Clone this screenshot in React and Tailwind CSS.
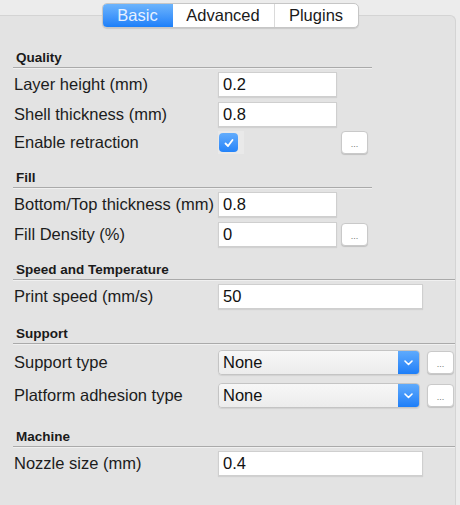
import React from "react";

function Header({ children, wide, top }) {
  return (
    <div className={top}>
      <div className="h-[19px] flex items-center pl-[3px] text-[13.5px] font-bold text-[#1a1a1a] leading-none">
        {children}
      </div>
      <div className={(wide ? "w-[442px]" : "w-[359px]") + " h-[2px] border-t border-[#aaaaaa] border-b border-b-[#f0f0f0]"} />
    </div>
  );
}

function Label({ children }) {
  return <div className="w-[205px] pl-[1px] text-[16.5px] text-[#1c1c1c] leading-none whitespace-nowrap">{children}</div>;
}

function TextBox({ value, w }) {
  return (
    <div className={w + " h-[25px] bg-white border border-[#cfcfcf] shadow-[0_1px_1px_rgba(0,0,0,0.08)] flex items-center pl-[4px] text-[16.5px] text-[#111] leading-none"}>
      {value}
    </div>
  );
}

function DotButton({ ml }) {
  return (
    <div className={ml + " w-[27px] h-[23px] bg-white rounded-[4px] border border-[#c9c9c9] shadow-[0_1px_1px_rgba(0,0,0,0.15)] flex items-center justify-center text-[9px] text-[#777] leading-none pt-[3px]"}>
      ...
    </div>
  );
}

function Select({ value }) {
  return (
    <div className="w-[202px] h-[25px] flex rounded-[4px] border border-[#c4c4c4] shadow-[0_1px_1px_rgba(0,0,0,0.08)] overflow-hidden">
      <div className="flex-1 bg-gradient-to-b from-[#f7f7f7] to-[#ececec] flex items-center pl-[4px] text-[16.5px] text-[#111] leading-none">
        {value}
      </div>
      <div className="w-[21px] bg-gradient-to-b from-[#5eaafc] to-[#1c7ef8] flex items-center justify-center">
        <svg width="9" height="6" viewBox="0 0 9 6">
          <path d="M1 1 L4.5 4.5 L8 1" fill="none" stroke="white" strokeWidth="1.6" strokeLinecap="round" strokeLinejoin="round" />
        </svg>
      </div>
    </div>
  );
}

export default function App() {
  return (
    <div className="w-[460px] h-[505px] bg-[#ececec] overflow-hidden font-['Liberation_Sans',Arial,sans-serif]">
      <div className="relative z-10 flex justify-center pt-[3px]">
        <div className="flex h-[25px] rounded-[5px] border border-[#c6c6c6] shadow-[0_1px_1px_rgba(0,0,0,0.12)] overflow-hidden bg-white text-[16.5px] leading-none">
          <div className="w-[70px] bg-gradient-to-b from-[#6cb4fc] to-[#1b7ff9] text-[#e6f1ff] flex items-center justify-center">Basic</div>
          <div className="w-[101px] text-[#1a1a1a] flex items-center justify-center">Advanced</div>
          <div className="w-[84px] border-l border-[#dadada] text-[#1a1a1a] flex items-center justify-center">Plugins</div>
        </div>
      </div>
      <div className="-mt-[13px] mr-[4px] h-[495px] bg-[#e3e3e3] border-t border-r border-[#d4d4d4] rounded-tr-[6px] pl-[13px] pt-[32px]">
        <Header>Quality</Header>
        <div className="mt-[3px] flex flex-col gap-[5px]">
          <div className="flex items-center h-[25px]">
            <Label>Layer height (mm)</Label>
            <TextBox value="0.2" w="w-[119px]" />
          </div>
          <div className="flex items-center h-[25px]">
            <Label>Shell thickness (mm)</Label>
            <TextBox value="0.8" w="w-[119px]" />
          </div>
          <div className="flex items-center h-[23px] -mt-[1px]">
            <Label>Enable retraction</Label>
            <div className="w-[26px] h-[23px] bg-[#e9e9e9] flex items-center pl-[1px]">
              <div className="w-[19px] h-[19px] rounded-[4px] bg-gradient-to-b from-[#62acfc] to-[#2383f9] flex items-center justify-center">
                <svg width="12" height="12" viewBox="0 0 12 12">
                  <path d="M2.5 6.5 L5 9 L9.5 3" fill="none" stroke="white" strokeWidth="1.8" strokeLinecap="round" strokeLinejoin="round" />
                </svg>
              </div>
            </div>
            <DotButton ml="ml-[97px]" />
          </div>
        </div>

        <Header top="mt-[14px]">Fill</Header>
        <div className="mt-[3px] flex flex-col gap-[5px]">
          <div className="flex items-center h-[25px]">
            <Label>Bottom/Top thickness (mm)</Label>
            <TextBox value="0.8" w="w-[119px]" />
          </div>
          <div className="flex items-center h-[25px]">
            <Label>Fill Density (%)</Label>
            <TextBox value="0" w="w-[119px]" />
            <DotButton ml="ml-[4px]" />
          </div>
        </div>

        <Header wide top="mt-[13px]">Speed and Temperature</Header>
        <div className="mt-[3px] flex flex-col gap-[5px]">
          <div className="flex items-center h-[25px]">
            <Label>Print speed (mm/s)</Label>
            <TextBox value="50" w="w-[205px]" />
          </div>
        </div>

        <Header wide top="mt-[15px]">Support</Header>
        <div className="mt-[5px] flex flex-col gap-[8px]">
          <div className="flex items-center h-[25px]">
            <Label>Support type</Label>
            <Select value="None" />
            <DotButton ml="ml-[7px]" />
          </div>
          <div className="flex items-center h-[25px]">
            <Label>Platform adhesion type</Label>
            <Select value="None" />
            <DotButton ml="ml-[7px]" />
          </div>
        </div>

        <Header wide top="mt-[19px]">Machine</Header>
        <div className="mt-[3px] flex flex-col gap-[5px]">
          <div className="flex items-center h-[25px]">
            <Label>Nozzle size (mm)</Label>
            <TextBox value="0.4" w="w-[205px]" />
          </div>
        </div>
      </div>
    </div>
  );
}
